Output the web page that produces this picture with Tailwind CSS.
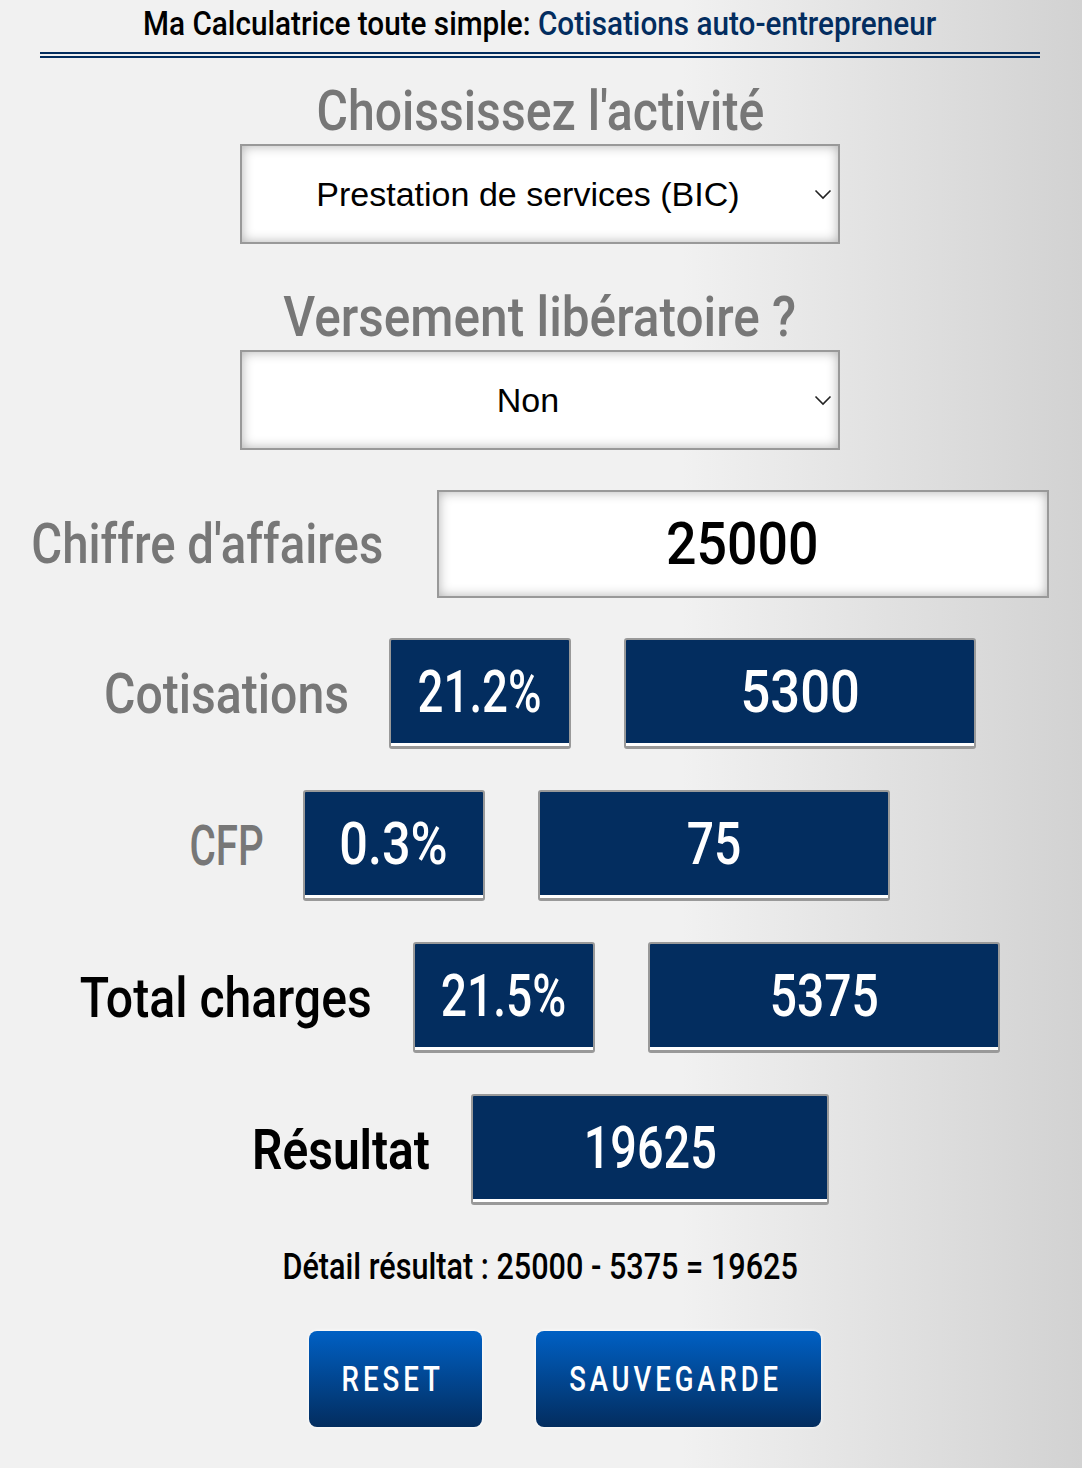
<!DOCTYPE html>
<html lang="fr"><head><meta charset="utf-8"><title>Calculatrice</title>
<script src="https://cdn.jsdelivr.net/npm/@tailwindcss/browser@4"></script></head>
<body class="m-0 h-[1468px] w-[1082px] overflow-hidden bg-[linear-gradient(to_right,#f1f1f1_0%,#f1f1f1_63%,#d2d2d2_100%)] font-['Roboto',sans-serif]">
<header class="ml-[40px] h-[58px] w-[1000px] border-b-[6px] border-double border-[#032d5f]">
  <div class="flex h-[46px] items-center justify-center"><p class="scale-x-[.90] whitespace-nowrap text-[33px] font-medium leading-none text-black">Ma Calculatrice toute simple: <span class="text-[#032d5f]">Cotisations auto-entrepreneur</span></p></div>
</header>
<main class="flex w-[1080px] flex-col items-center">
  <h2 class="mt-[20px] flex h-[66px] items-center justify-center"><span class="scale-x-[.86] whitespace-nowrap text-[56px] font-medium leading-none text-[#777]">Choississez l'activité</span></h2>
  <div class="relative h-[100px] w-[600px]">
    <select class="h-full w-full appearance-none border-2 border-[#999] bg-white pr-[24px] text-center font-['Liberation_Sans',sans-serif] text-[34px] text-black shadow-[inset_0_0_12px_rgba(0,0,0,.3)] [text-align-last:center]"><option>Prestation de services (BIC)</option></select>
    <svg class="absolute right-[8px] top-[44px]" width="18" height="12" viewBox="0 0 18 12" fill="none" stroke="#222" stroke-width="1.6"><path d="M1.5 2.5 9 10l7.500-7.500"/></svg>
  </div>
  <h2 class="mt-[40px] flex h-[66px] items-center justify-center"><span class="scale-x-[.885] whitespace-nowrap text-[56px] font-medium leading-none text-[#777]">Versement libératoire ?</span></h2>
  <div class="relative h-[100px] w-[600px]">
    <select class="h-full w-full appearance-none border-2 border-[#999] bg-white pr-[24px] text-center font-['Liberation_Sans',sans-serif] text-[34px] text-black shadow-[inset_0_0_12px_rgba(0,0,0,.3)] [text-align-last:center]"><option>Non</option></select>
    <svg class="absolute right-[8px] top-[44px]" width="18" height="12" viewBox="0 0 18 12" fill="none" stroke="#222" stroke-width="1.6"><path d="M1.5 2.5 9 10l7.500-7.500"/></svg>
  </div>
  <div class="mt-[40px] flex h-[108px] items-center gap-[54px]">
    <div class="flex w-[351px] justify-center"><span class="scale-x-[.845] whitespace-nowrap text-[56px] font-medium leading-none text-[#777]">Chiffre d'affaires</span></div>
    <div class="flex h-full w-[612px] items-center justify-center border-2 border-[#999] bg-white shadow-[inset_0_0_12px_rgba(0,0,0,.3)]"><span class="scale-x-[.895] text-[60px] font-medium leading-none text-black">25000</span></div>
  </div>
  <div class="mt-[40px] flex h-[111px] items-center">
    <div class="mr-[41px] flex w-[244px] justify-center"><span class="scale-x-[.86] whitespace-nowrap text-[56px] font-medium leading-none text-[#777]">Cotisations</span></div>
    <div class="mr-[53px] flex h-full w-[182px] items-center justify-center rounded-[3px] border-2 border-b-[3px] border-[#999] bg-[#032d5f] pb-[3px] shadow-[inset_0_-3px_0_#fff]"><span class="scale-x-[.76] text-[60px] font-medium leading-none text-white">21.2%</span></div>
    <div class="flex h-full w-[352px] items-center justify-center rounded-[3px] border-2 border-b-[3px] border-[#999] bg-[#032d5f] pb-[3px] shadow-[inset_0_-3px_0_#fff]"><span class="scale-x-[.875] text-[60px] font-medium leading-none text-white">5300</span></div>
  </div>
  <div class="mt-[41px] flex h-[111px] items-center">
    <div class="mr-[39px] flex w-[74px] justify-center"><span class="scale-x-[.72] whitespace-nowrap text-[56px] font-medium leading-none text-[#777]">CFP</span></div>
    <div class="mr-[53px] flex h-full w-[182px] items-center justify-center rounded-[3px] border-2 border-b-[3px] border-[#999] bg-[#032d5f] pb-[3px] shadow-[inset_0_-3px_0_#fff]"><span class="scale-x-[.84] text-[60px] font-medium leading-none text-white">0.3%</span></div>
    <div class="flex h-full w-[352px] items-center justify-center rounded-[3px] border-2 border-b-[3px] border-[#999] bg-[#032d5f] pb-[3px] shadow-[inset_0_-3px_0_#fff]"><span class="scale-x-[.80] text-[60px] font-medium leading-none text-white">75</span></div>
  </div>
  <div class="mt-[41px] flex h-[111px] items-center">
    <div class="mr-[41px] flex w-[292px] justify-center"><span class="scale-x-[.86] whitespace-nowrap text-[56px] font-medium leading-none text-black">Total charges</span></div>
    <div class="mr-[53px] flex h-full w-[182px] items-center justify-center rounded-[3px] border-2 border-b-[3px] border-[#999] bg-[#032d5f] pb-[3px] shadow-[inset_0_-3px_0_#fff]"><span class="scale-x-[.77] text-[60px] font-medium leading-none text-white">21.5%</span></div>
    <div class="flex h-full w-[352px] items-center justify-center rounded-[3px] border-2 border-b-[3px] border-[#999] bg-[#032d5f] pb-[3px] shadow-[inset_0_-3px_0_#fff]"><span class="scale-x-[.80] text-[60px] font-medium leading-none text-white">5375</span></div>
  </div>
  <div class="mt-[41px] flex h-[111px] items-center">
    <div class="mr-[40px] flex w-[180px] justify-center"><span class="scale-x-[.855] whitespace-nowrap text-[56px] font-semibold leading-none text-black">Résultat</span></div>
    <div class="flex h-full w-[358px] items-center justify-center rounded-[3px] border-2 border-b-[3px] border-[#999] bg-[#032d5f] pb-[3px] shadow-[inset_0_-3px_0_#fff]"><span class="scale-x-[.78] text-[60px] font-medium leading-none text-white">19625</span></div>
  </div>
  <div class="mt-[42px] flex h-[40px] items-center justify-center"><p class="scale-x-[.85] whitespace-nowrap text-[36px] font-medium leading-none text-black">Détail résultat : 25000 - 5375 = 19625</p></div>
  <div class="ml-[50px] mt-[44px] flex gap-[54px]">
    <button class="flex h-[96px] w-[173px] items-center justify-center rounded-[8px] bg-[linear-gradient(to_bottom,#0060c4,#032d5f)] pr-[5px] shadow-[0_0_3px_1px_rgba(255,255,255,.7)]"><span class="scale-x-[.79] text-[35px] font-medium leading-none tracking-[5px] text-white">RESET</span></button>
    <button class="flex h-[96px] w-[285px] items-center justify-center rounded-[8px] bg-[linear-gradient(to_bottom,#0060c4,#032d5f)] pr-[5px] shadow-[0_0_3px_1px_rgba(255,255,255,.7)]"><span class="scale-x-[.785] text-[35px] font-medium leading-none tracking-[5px] text-white">SAUVEGARDE</span></button>
  </div>
</main>
</body></html>
